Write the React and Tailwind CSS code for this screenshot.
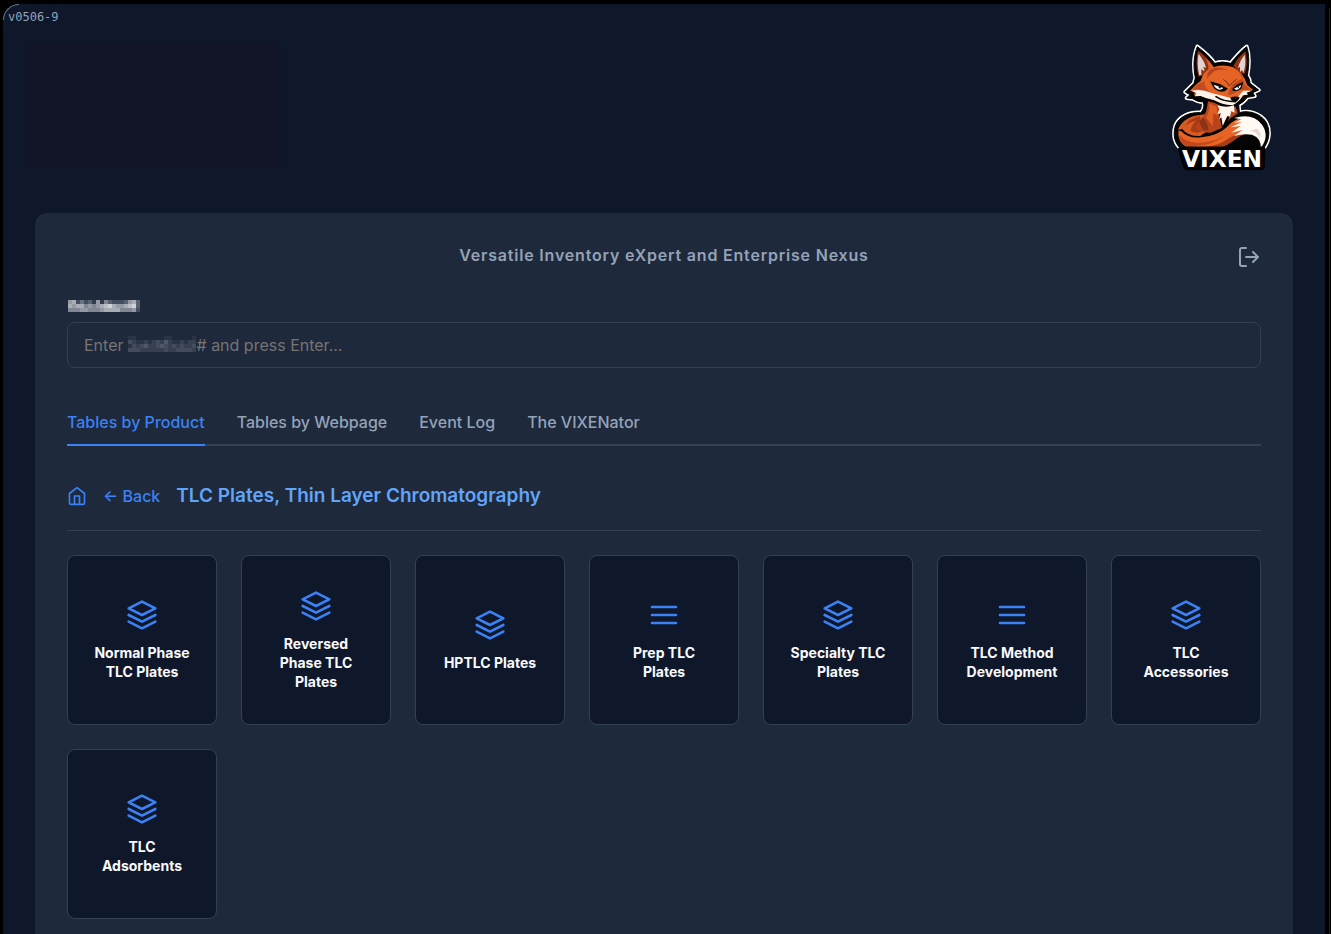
import React, { useState } from 'react';

const TABS = ['Tables by Product', 'Tables by Webpage', 'Event Log', 'The VIXENator'];

const CATEGORIES = [
    { name: 'Normal Phase TLC Plates', icon: 'layers' },
    { name: 'Reversed Phase TLC Plates', icon: 'layers' },
    { name: 'HPTLC Plates', icon: 'layers' },
    { name: 'Prep TLC Plates', icon: 'menu' },
    { name: 'Specialty TLC Plates', icon: 'layers' },
    { name: 'TLC Method Development', icon: 'menu' },
    { name: 'TLC Accessories', icon: 'layers' },
    { name: 'TLC Adsorbents', icon: 'layers' },
];

// Brightness of each mosaic cell, 0-9
const LABEL_MOSAIC = [
    '672423161532223673',
    '767756567897667893',
    '555665556777755562',
];

const FIELD_MOSAIC = [
    '11000000011000001',
    '32112123242112122',
    '13234223432323223',
    '33322222232233332',
];

function Icon({ children, className }) {
    return (
        <svg
            viewBox="0 0 24 24"
            fill="none"
            stroke="currentColor"
            strokeWidth="2"
            strokeLinecap="round"
            strokeLinejoin="round"
            className={className}
            aria-hidden="true"
        >
            {children}
        </svg>
    );
}

function CategoryIcon({ type }) {
    if (type === 'menu') {
        return (
            <Icon className="size-8 text-[#3b82f6]">
                <path d="M3 6h18M3 12h18M3 18h18" />
            </Icon>
        );
    }
    return (
        <Icon className="size-8 text-[#3b82f6]">
            <path d="M12 2 2 7l10 5 10-5-10-5z" />
            <path d="m2 17 10 5 10-5" />
            <path d="m2 12 10 5 10-5" />
        </Icon>
    );
}

function Mosaic({ rows, color, className }) {
    return (
        <svg
            viewBox={`0 0 ${rows[0].length * 4} ${rows.length * 4}`}
            shapeRendering="crispEdges"
            className={className}
            role="img"
            aria-label="Item number"
        >
            {rows.map((row, y) =>
                [...row].map((v, x) => (
                    <rect key={`${x}-${y}`} x={x * 4} y={y * 4} width="4" height="4" fill={color} opacity={v / 10} />
                ))
            )}
        </svg>
    );
}

function FoxLogo() {
    const outline = 'M112 38 C128 50 148 66 164 88 Q188 80 212 88 C228 68 244 50 260 38 C268 62 268 92 262 124 Q270 136 270 148 L296 168 L278 176 L284 186 L262 190 Q250 206 236 212 L238 236 C262 228 300 236 318 264 C334 292 326 326 308 346 L66 346 C44 332 38 302 46 276 C56 248 88 234 122 236 Q136 222 130 204 Q112 204 98 194 L80 192 L90 182 L76 174 L102 148 L106 132 C100 100 100 68 112 38 Z';
    return (
        <svg viewBox="33 27 300 390" className="mt-[3px] h-[130px] w-[100px]" role="img" aria-label="Vixen logo">
            <path d={outline} fill="#fff" stroke="#fff" strokeWidth="12" strokeLinejoin="round" />
            <path d={outline} fill="#050505" stroke="#050505" strokeWidth="3" strokeLinejoin="round" />

            {/* ears */}
            <path d="M114 50 C132 62 150 80 160 100 L134 124 L116 128 C108 102 108 74 114 50Z" fill="#8d3215" />
            <path d="M116 60 C126 72 136 88 138 102 L130 98 L134 112 L124 106 L124 122 L118 124 C112 98 112 76 116 60Z" fill="#e3d4cf" />
            <path d="M136 72 Q154 86 166 106 L144 120 Q150 92 136 72Z" fill="#e06024" />
            <path d="M256 52 C262 74 262 98 254 120 L242 118 L220 96 C230 76 244 62 256 52Z" fill="#8d3215" />
            <path d="M254 62 C258 84 256 102 250 116 L246 108 L240 114 L240 98 L234 102 C238 84 246 72 254 62Z" fill="#e3d4cf" />

            {/* face */}
            <path d="M122 140 Q130 110 156 101 Q188 88 220 100 Q244 114 254 134 L262 154 L280 168 L262 172 L246 190 L218 212 Q190 210 160 198 L124 186 L102 184 L104 174 L90 170 L110 150Z" fill="#e46325" />
            <path d="M214 98 Q240 110 250 132 L238 138 L218 150 L208 168 L204 184 L218 180 L242 168 L272 167 L252 150 Q246 114 214 98Z" fill="#bd4a1e" />
            <path d="M152 106 Q176 94 204 108 Q174 104 160 114 Q146 124 140 136 L144 118 L134 128Z" fill="#b8431b" />
            <path d="M112 152 L98 168 L118 164 L108 174 Q128 168 148 174 Q132 158 134 142Z" fill="#c34b1d" />
            <path d="M94 170 Q128 164 152 176 Q184 184 212 192 L228 200 Q238 180 250 170 L276 170 L260 176 L264 182 L248 184 Q238 206 216 214 Q186 212 162 198 Q138 194 122 186 L104 187 L110 178Z" fill="#fff3e9" />
            <path d="M168 188 Q190 203 226 203" fill="none" stroke="#090909" strokeWidth="5" strokeLinecap="round" />
            <path d="M211 191 Q226 185 239 190 Q235 202 225 204 Q214 202 211 191Z" fill="#080808" />

            {/* eyes and brows */}
            <path d="M150 142 L180 150 L204 164 L194 172 Q176 176 163 164Z" fill="#080808" />
            <path d="M161 152 L190 162 Q184 169 173 166 Q163 161 161 152Z" fill="#fff" />
            <path d="M175 156 L183 159 L181 164 Q175 162 175 156Z" fill="#080808" />
            <path d="M217 164 L230 152 L250 143 L244 164 Q230 174 218 170Z" fill="#080808" />
            <path d="M222 164 L243 153 Q243 164 229 168Z" fill="#fff" />
            <path d="M232 159 L238 156 L236 163Z" fill="#080808" />
            <path d="M190 136 Q204 144 208 156 Q216 144 230 136" fill="none" stroke="#7e2c13" strokeWidth="3" />

            {/* shoulders and chest */}
            <path d="M126 242 Q74 246 56 282 Q52 300 62 316 L112 312 L150 286 L136 240Z" fill="#d95a22" />
            <path d="M120 246 Q88 252 74 278 Q92 262 108 262 Q92 276 92 292 Q108 300 126 292Z" fill="#a93b17" />
            <path d="M144 202 Q166 206 182 216 L178 244 L186 282 L152 296 Q120 296 106 278 Q136 246 140 226Z" fill="#b9431b" />
            <path d="M148 208 L170 218 L172 246 L160 236 L158 278 Q146 258 138 252 Q150 230 148 208Z" fill="#e06024" />
            <path d="M128 250 Q142 262 146 290 L128 288 Q120 272 118 262Z" fill="#8d3215" />
            <path d="M226 216 L234 238 L212 252 L204 262 L212 236Z" fill="#b9431b" />
            <path d="M172 214 Q200 222 222 214 L224 236 L214 232 L210 248 L202 246 L188 276 L184 250 L178 256 L182 238 L172 240 L178 226Z" fill="#fff4ec" />

            {/* tail */}
            <path d="M66 284 Q84 308 122 306 Q170 304 196 276 Q218 248 254 244 Q296 248 310 278 Q322 312 304 340 L176 346 L80 342 Q48 322 56 288Z" fill="#050505" />
            <path d="M62 290 Q84 314 124 310 Q172 306 200 280 Q220 254 256 250 L270 292 Q240 300 216 322 Q190 344 150 346 L84 342 Q50 324 56 292Z" fill="#e86425" />
            <path d="M60 304 Q82 330 126 326 Q168 322 196 302 Q172 326 128 334 Q92 336 84 342 Q58 328 58 306Z" fill="#c2481b" />
            <path d="M130 340 Q176 336 208 312 Q228 298 262 296 Q238 306 218 322 Q190 344 150 346Z" fill="#a93b17" />
            <path d="M222 252 Q278 236 306 272 Q330 306 302 342 Q304 312 276 302 Q248 298 222 306 L248 288 L214 296 L242 276 L212 280 L246 264 L222 266 L244 256Z" fill="#fffaf4" />
            <path d="M268 290 Q292 292 300 314 Q306 300 292 284Z" fill="#e7d6ce" />

            <path d="M56 348 Q56 340 66 340 H308 Q316 340 314 350 L312 396 Q312 406 302 406 H84 Q76 406 72 398Z" fill="#030303" stroke="#030303" strokeWidth="5" />
            <text x="186" y="399" textAnchor="middle" fill="#fff" fontSize="70" fontWeight="700" fontFamily="'DejaVu Sans', sans-serif">
                VIXEN
            </text>
        </svg>
    );
}

function Header() {
    return (
        <header>
            <div className="px-[5px] pt-[5px] font-['DejaVu_Sans_Mono',monospace] text-xs leading-4 text-[#94a3b8]">v0506-9</div>
            <div className="mt-[15px] flex items-start justify-between pr-[54px] pl-6">
                <div className="mt-1 h-[122px] w-[252px] bg-[#111527] shadow-[0_0_3px_#111527]"></div>
                <FoxLogo />
            </div>
        </header>
    );
}

function TabBar({ active, onSelect }) {
    return (
        <nav className="mt-8 flex gap-8 border-b-2 border-[#334155]">
            {TABS.map((tab) => (
                <button
                    key={tab}
                    type="button"
                    onClick={() => onSelect(tab)}
                    className={
                        tab === active
                            ? '-mb-0.5 border-b-2 border-[#3b82f6] py-[10px] font-medium text-[#3b82f6]'
                            : '-mb-0.5 border-b-2 border-transparent py-[10px] font-medium text-[#94a3b8]'
                    }
                >
                    {tab}
                </button>
            ))}
        </nav>
    );
}

export default function App() {
    const [activeTab, setActiveTab] = useState(TABS[0]);

    return (
        <div className="flex min-h-screen bg-black pt-1 pl-[3px] font-[Inter,sans-serif] text-base">
            <div className="relative flex flex-1 flex-col rounded-tl-2xl bg-[#0f172a]">
                <span className="absolute top-0 left-0 size-4 rounded-tl-2xl border-t border-l border-[#64748b]"></span>
                <Header />
                <main className="mx-8 mt-10 flex-1 rounded-t-xl bg-[#1e293b] px-8 pt-8">
                    <div className="grid grid-cols-[24px_1fr_24px] items-start">
                        <h1 className="col-start-2 text-center leading-5 font-semibold tracking-wider text-[#94a3b8]">
                            Versatile Inventory eXpert and Enterprise Nexus
                        </h1>
                        <button type="button" aria-label="Log out" className="text-[#94a3b8]">
                            <Icon className="size-6">
                                <path d="M9 21H5a2 2 0 0 1-2-2V5a2 2 0 0 1 2-2h4" />
                                <path d="m16 17 5-5-5-5M21 12H9" />
                            </Icon>
                        </button>
                    </div>

                    <label htmlFor="item-number" className="mt-[31px] block pl-px">
                        <Mosaic rows={LABEL_MOSAIC} color="#e2e5ea" className="h-3 w-[72px]" />
                    </label>
                    <div className="relative mt-[10px]">
                        <input
                            id="item-number"
                            type="text"
                            placeholder={'Enter \u2003\u2003\u2003\u2003 # and press Enter...'}
                            className="block h-[46px] w-full rounded-lg border border-[#334155] bg-transparent px-4 text-slate-200 outline-none placeholder:text-[#757575]"
                        />
                        <Mosaic rows={FIELD_MOSAIC} color="#9a9ea5" className="pointer-events-none absolute top-[14px] left-[61px] h-4 w-[68px]" />
                    </div>

                    <TabBar active={activeTab} onSelect={setActiveTab} />

                    <div className="mt-9 flex items-center gap-4 border-b border-[#334155] pb-5">
                        <button type="button" aria-label="Home" className="text-[#3b82f6]">
                            <Icon className="size-5">
                                <path d="m3 9 9-7 9 7v11a2 2 0 0 1-2 2H5a2 2 0 0 1-2-2z" />
                                <path d="M9 22V12h6v10" />
                            </Icon>
                        </button>
                        <button type="button" className="font-medium text-[#3b82f6]">← Back</button>
                        <h2 className="text-[19px] leading-7 font-semibold text-[#60a5fa]">TLC Plates, Thin Layer Chromatography</h2>
                    </div>

                    <div className="mt-6 grid grid-cols-[repeat(auto-fill,minmax(150px,1fr))] gap-6">
                        {CATEGORIES.map((c) => (
                            <button
                                key={c.name}
                                type="button"
                                className="flex h-[170px] flex-col items-center justify-center gap-3 rounded-lg border border-[#334155] bg-[#0f172a] px-6 text-sm leading-[19px] font-bold text-[#f8fafc]"
                            >
                                <CategoryIcon type={c.icon} />
                                <span>{c.name}</span>
                            </button>
                        ))}
                    </div>
                </main>
            </div>
            <div className="mt-1 mr-px w-[5px] border-r border-neutral-800"></div>
        </div>
    );
}
